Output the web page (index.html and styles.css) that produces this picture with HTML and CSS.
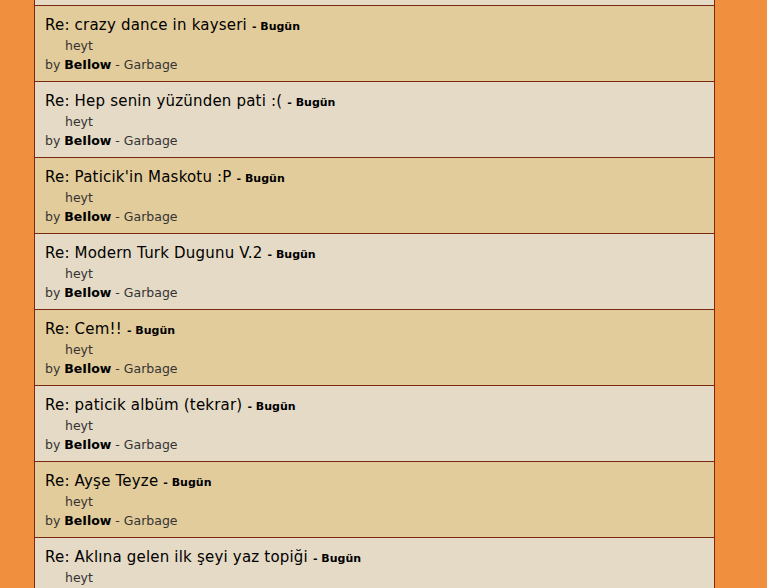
FILE: index.html
```html
<!DOCTYPE html>
<html lang="tr">
<head>
    <meta charset="UTF-8">
    <title>Son Mesajlar</title>
    <link rel="stylesheet" href="styles.css">
</head>
<body>
    <div class="container">
        <div class="post post-light post-tail"></div>

        <div class="post post-dark">
            <div class="title">Re: crazy dance in kayseri <span class="date">- Bugün</span></div>
            <div class="body">heyt</div>
            <div class="meta">by <strong>BeIlow</strong> - Garbage</div>
        </div>
        <div class="post post-light">
            <div class="title">Re: Hep senin yüzünden pati :( <span class="date">- Bugün</span></div>
            <div class="body">heyt</div>
            <div class="meta">by <strong>BeIlow</strong> - Garbage</div>
        </div>
        <div class="post post-dark">
            <div class="title">Re: Paticik'in Maskotu :P <span class="date">- Bugün</span></div>
            <div class="body">heyt</div>
            <div class="meta">by <strong>BeIlow</strong> - Garbage</div>
        </div>
        <div class="post post-light">
            <div class="title">Re: Modern Turk Dugunu V.2 <span class="date">- Bugün</span></div>
            <div class="body">heyt</div>
            <div class="meta">by <strong>BeIlow</strong> - Garbage</div>
        </div>
        <div class="post post-dark">
            <div class="title">Re: Cem!! <span class="date">- Bugün</span></div>
            <div class="body">heyt</div>
            <div class="meta">by <strong>BeIlow</strong> - Garbage</div>
        </div>
        <div class="post post-light">
            <div class="title">Re: paticik albüm (tekrar) <span class="date">- Bugün</span></div>
            <div class="body">heyt</div>
            <div class="meta">by <strong>BeIlow</strong> - Garbage</div>
        </div>
        <div class="post post-dark">
            <div class="title">Re: Ayşe Teyze <span class="date">- Bugün</span></div>
            <div class="body">heyt</div>
            <div class="meta">by <strong>BeIlow</strong> - Garbage</div>
        </div>
        <div class="post post-light">
            <div class="title">Re: Aklına gelen ilk şeyi yaz topiği <span class="date">- Bugün</span></div>
            <div class="body">heyt</div>
            <div class="meta">by <strong>BeIlow</strong> - Garbage</div>
        </div>
    </div>
</body>
</html>
```

FILE: styles.css
```css
body {
    margin: 0;
    background-color: #f0903f;
    font-family: "DejaVu Sans", Verdana, sans-serif;
    color: #1a1a1a;
}
.container {
    width: 679px;
    margin-left: 34px;
    border-left: 1px solid #7a2812;
    border-right: 1px solid #7a2812;
    min-height: 588px;
    background-color: #e5dac5;
}
.post {
    height: 76px;
    padding: 9px 10px 0 10px;
    box-sizing: border-box;
    border-top: 1px solid #7a2812;
}
.post-tail {
    height: 5px;
    padding: 0;
    border-top: none;
}
.post-dark {
    background-color: #e3cc9b;
}
.post-light {
    background-color: #e5dac5;
}
.title {
    font-size: 15px;
    line-height: 20px;
    letter-spacing: 0.2px;
    color: #000;
}
.date {
    font-size: 11px;
    font-weight: bold;
    letter-spacing: 0;
}
.body {
    font-size: 12.5px;
    line-height: 18px;
    padding-left: 20px;
    color: #333;
}
.meta {
    font-size: 12.5px;
    line-height: 19px;
    color: #333;
}
.meta strong {
    color: #000;
}
```
